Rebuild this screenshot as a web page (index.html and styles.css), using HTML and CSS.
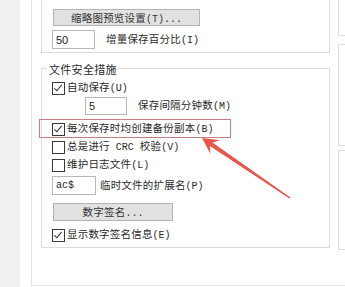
FILE: index.html
```html
<!doctype html>
<html lang="zh-CN">
    <head>
        <meta charset="UTF-8" />
        <meta name="viewport" content="width=device-width, initial-scale=1.0" />
        <title>选项 - 打开和保存</title>
        <link rel="stylesheet" href="styles.css">
    </head>
    <body>
        <div class="window">
            <div class="rail"></div>
            <div class="gutter"></div>
            <div class="frame">
                <div class="main">
                    <!-- Upper group, scrolled partly out of view -->
                    <div class="group group-top">
                        <div class="row row-cut">
                            <span class="check"></span>
                            <span class="label">保存缩略图预览图像<span class="key">(V)</span></span>
                        </div>
                        <button class="btn btn-wide">缩略图预览设置<span class="key">(T)...</span></button>
                        <div class="row row-input">
                            <input class="field field-50" type="text" value="50" />
                            <span class="label gap">增量保存百分比<span class="key">(I)</span></span>
                        </div>
                    </div>

                    <div class="group group-safety">
                        <span class="group-title">文件安全措施</span>
                        <div class="row row-cb first">
                            <span class="check on"></span>
                            <span class="label">自动保存<span class="key">(U)</span></span>
                        </div>
                        <div class="row row-input indent">
                            <input class="field field-5" type="text" value="5" />
                            <span class="label gap">保存间隔分钟数<span class="key">(M)</span></span>
                        </div>
                        <div class="row row-cb backup">
                            <span class="check on"></span>
                            <span class="label">每次保存时均创建备份副本<span class="key">(B)</span></span>
                        </div>
                        <div class="row row-cb tight">
                            <span class="check"></span>
                            <span class="label">总是进行<span class="key"> CRC </span>校验<span class="key">(V)</span></span>
                        </div>
                        <div class="row row-cb tight">
                            <span class="check"></span>
                            <span class="label">维护日志文件<span class="key">(L)</span></span>
                        </div>
                        <div class="row row-input temp">
                            <input class="field field-ext" type="text" value="ac$" />
                            <span class="label gap-small">临时文件的扩展名<span class="key">(P)</span></span>
                        </div>
                        <button class="btn btn-sign">数字签名<span class="key">...</span></button>
                        <div class="row row-cb last">
                            <span class="check on"></span>
                            <span class="label">显示数字签名信息<span class="key">(E)</span></span>
                        </div>
                    </div>

                    <div class="highlight"></div>
                </div>

                <div class="side">
                    <div class="side-box box-a"></div>
                    <div class="side-box box-b"></div>
                    <div class="side-box box-c"></div>
                </div>
            </div>

            <!-- Annotation arrow pointing at the backup option -->
            <svg class="arrow" width="345" height="287" viewBox="0 0 345 287">
                <polygon
                    points="202,138 220,140.2 212.4,142.6 290.5,197.4 289.5,198.6 209.9,146.1 210.5,154"
                    fill="#e8554b"
                />
            </svg>
        </div>
    </body>
</html>
```

FILE: styles.css
```css
body {
    margin: 0;
    background: #fff;
    font-family: "Noto Sans CJK SC", sans-serif;
    font-size: 10.5px;
    color: #2a2a2a;
}

.window {
    position: relative;
    display: flex;
    width: 345px;
    height: 287px;
    overflow: hidden;
}

.rail {
    width: 20px;
    background: #f0f0f0;
    flex: none;
}

.gutter {
    width: 11px;
    flex: none;
}

.frame {
    display: flex;
    flex: none;
    width: 340px;
    height: 286px;
    padding-left: 9px;
    border-left: 1px solid #e2e2e2;
    border-bottom: 1px solid #e2e2e2;
    box-sizing: border-box;
    overflow: hidden;
}

.main {
    position: relative;
    display: flex;
    flex-direction: column;
    width: 289px;
    flex: none;
}

.group {
    display: flex;
    flex-direction: column;
    align-items: flex-start;
    border: 1px solid #dcdcdc;
    padding: 0 10px;
}

.group-top {
    margin-top: -31px;
    padding-top: 14px;
    padding-bottom: 3px;
}

.group-safety {
    margin-top: 15px;
    height: 180px;
    box-sizing: border-box;
}

.group-title {
    margin: -8px 0 0 -5px;
    padding: 0 2px;
    line-height: 16px;
    background: #fff;
    font-size: 11px;
    letter-spacing: 0.3px;
}

.row {
    display: flex;
    align-items: center;
    white-space: nowrap;
}

.row-cut {
    height: 19px;
}

.row-cb {
    height: 16px;
}

.row-cb.first {
    margin-top: 3px;
}

.row-cb.backup {
    margin-top: 6px;
}

.row-cb.tight {
    margin-top: 2px;
}

.row-cb.last {
    margin-top: 6px;
}

.row-input {
    height: 19px;
    margin-top: 4px;
}

.row-input.indent {
    margin-top: 0;
    padding-left: 33px;
}

.row-input.temp {
    margin-top: 3px;
}

.check {
    width: 11px;
    height: 11px;
    border: 1px solid #3a3a3a;
    background: #fff;
    margin-right: 2px;
    position: relative;
    flex: none;
}

.check.on::after {
    content: "";
    position: absolute;
    left: 3px;
    top: 0;
    width: 3px;
    height: 7px;
    border: solid #333;
    border-width: 0 1px 1px 0;
    transform: rotate(40deg);
}

.label {
    line-height: 16px;
    letter-spacing: 0.2px;
}

.key {
    font-family: "Liberation Mono", monospace;
    font-size: 10px;
    letter-spacing: 0;
    white-space: pre;
}

.gap {
    margin-left: 11px;
}

.gap-small {
    margin-left: 4px;
}

.field {
    height: 19px;
    box-sizing: border-box;
    border: 1px solid #b8b8b8;
    padding: 0 3px;
    font-family: "Liberation Sans", sans-serif;
    font-size: 11px;
    color: #222;
    background: #fff;
    outline: none;
}

.field-50 {
    width: 43px;
}

.field-5 {
    width: 42px;
    height: 18px;
}

.field-ext {
    width: 44px;
    height: 19px;
    font-family: "Liberation Mono", monospace;
    font-size: 10px;
}

.btn {
    height: 17px;
    padding: 0;
    margin-left: 1px;
    border: 1px solid #b4b4b4;
    background: #e1e1e1;
    font-family: "Noto Sans CJK SC", sans-serif;
    font-size: 10.5px;
    letter-spacing: 0.2px;
    line-height: 15px;
    color: #333;
}

.btn-wide {
    width: 147px;
    margin-top: 6px;
}

.btn-sign {
    width: 120px;
    height: 18px;
    margin-top: 8px;
}

.highlight {
    position: absolute;
    left: -2px;
    top: 119px;
    width: 190px;
    height: 17px;
    border: 1px solid #c47f85;
}

.side {
    display: flex;
    flex-direction: column;
    margin-left: 8px;
    flex: none;
    width: 40px;
}

.side-box {
    border: 1px solid #dcdcdc;
    border-right: none;
    box-sizing: border-box;
}

.box-a {
    margin-top: -10px;
    height: 46px;
}

.box-b {
    margin-top: 8px;
    height: 102px;
}

.box-c {
    margin-top: 4px;
    height: 100px;
}

.arrow {
    position: absolute;
    left: 0;
    top: 0;
    pointer-events: none;
}
```
